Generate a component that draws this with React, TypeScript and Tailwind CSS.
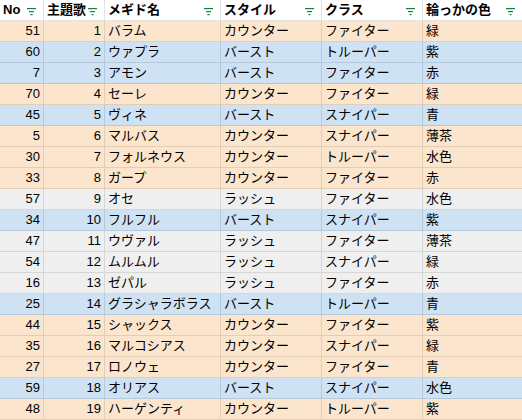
type Row = [number, number, string, string, string, string];

const rows: Row[] = [
  [51, 1, 'バラム', 'カウンター', 'ファイター', '緑'],
  [60, 2, 'ウァプラ', 'バースト', 'トルーパー', '紫'],
  [7, 3, 'アモン', 'バースト', 'ファイター', '赤'],
  [70, 4, 'セーレ', 'カウンター', 'ファイター', '緑'],
  [45, 5, 'ヴィネ', 'バースト', 'スナイパー', '青'],
  [5, 6, 'マルバス', 'カウンター', 'スナイパー', '薄茶'],
  [30, 7, 'フォルネウス', 'カウンター', 'トルーパー', '水色'],
  [33, 8, 'ガープ', 'カウンター', 'ファイター', '赤'],
  [57, 9, 'オセ', 'ラッシュ', 'ファイター', '水色'],
  [34, 10, 'フルフル', 'バースト', 'スナイパー', '紫'],
  [47, 11, 'ウヴァル', 'ラッシュ', 'ファイター', '薄茶'],
  [54, 12, 'ムルムル', 'ラッシュ', 'スナイパー', '緑'],
  [16, 13, 'ゼパル', 'ラッシュ', 'ファイター', '赤'],
  [25, 14, 'グラシャラボラス', 'バースト', 'トルーパー', '青'],
  [44, 15, 'シャックス', 'カウンター', 'ファイター', '紫'],
  [35, 16, 'マルコシアス', 'カウンター', 'スナイパー', '緑'],
  [27, 17, 'ロノウェ', 'カウンター', 'ファイター', '青'],
  [59, 18, 'オリアス', 'バースト', 'スナイパー', '水色'],
  [48, 19, 'ハーゲンティ', 'カウンター', 'トルーパー', '紫'],
];

const widths = ['w-[44px]', 'w-[61px]', 'w-[116px]', 'w-[101px]', 'w-[101px]', 'w-[99px]'];
const headers = ['No', '主題歌', 'メギド名', 'スタイル', 'クラス', '輪っかの色'];

// row colour follows the style column
const styleColors: Record<string, string> = {
  'カウンター': 'bg-[#fce5cd] border-[#e3cdb7]',
  'バースト': 'bg-[#cfe2f3] border-[#b5c9dc]',
  'ラッシュ': 'bg-[#efefef] border-[#d6d6d6]',
};

function FilterIcon() {
  return (
    <svg width="9" height="8" viewBox="0 0 9 8" className="absolute right-[7px] top-[8px]">
      <rect x="0" y="0" width="9" height="1.2" fill="#188038" />
      <rect x="2" y="3" width="5" height="1.2" fill="#188038" />
      <rect x="3.5" y="6" width="2" height="1.2" fill="#188038" />
    </svg>
  );
}

export default function App() {
  return (
    <div
      className="w-[522px] h-[420px] overflow-hidden bg-white text-[13px] leading-[20px] text-black"
      style={{ fontFamily: '"Liberation Sans", Arial, "Noto Sans CJK JP", sans-serif' }}
    >
      {/* Header */}
      <div className="flex h-[21px] bg-white border-b border-[#e2e2e2]">
        {headers.map((h, i) => (
          <div
            key={h}
            className={`relative ${widths[i]} shrink-0 h-[20px] px-[3px] font-bold whitespace-nowrap overflow-hidden border-r border-[#e2e2e2] last:border-r-0`}
          >
            {h}
            <FilterIcon />
          </div>
        ))}
      </div>

      {/* Body */}
      {rows.map((r) => {
        const c = styleColors[r[3]];
        return (
          <div key={r[0]} className={`flex h-[21px] border-b ${c}`}>
            {r.map((v, i) => (
              <div
                key={i}
                className={`${widths[i]} shrink-0 h-[20px] px-[3px] whitespace-nowrap overflow-hidden border-r last:border-r-0 ${c} ${i < 2 ? 'text-right' : 'text-left'}`}
              >
                {v}
              </div>
            ))}
          </div>
        );
      })}
    </div>
  );
}
